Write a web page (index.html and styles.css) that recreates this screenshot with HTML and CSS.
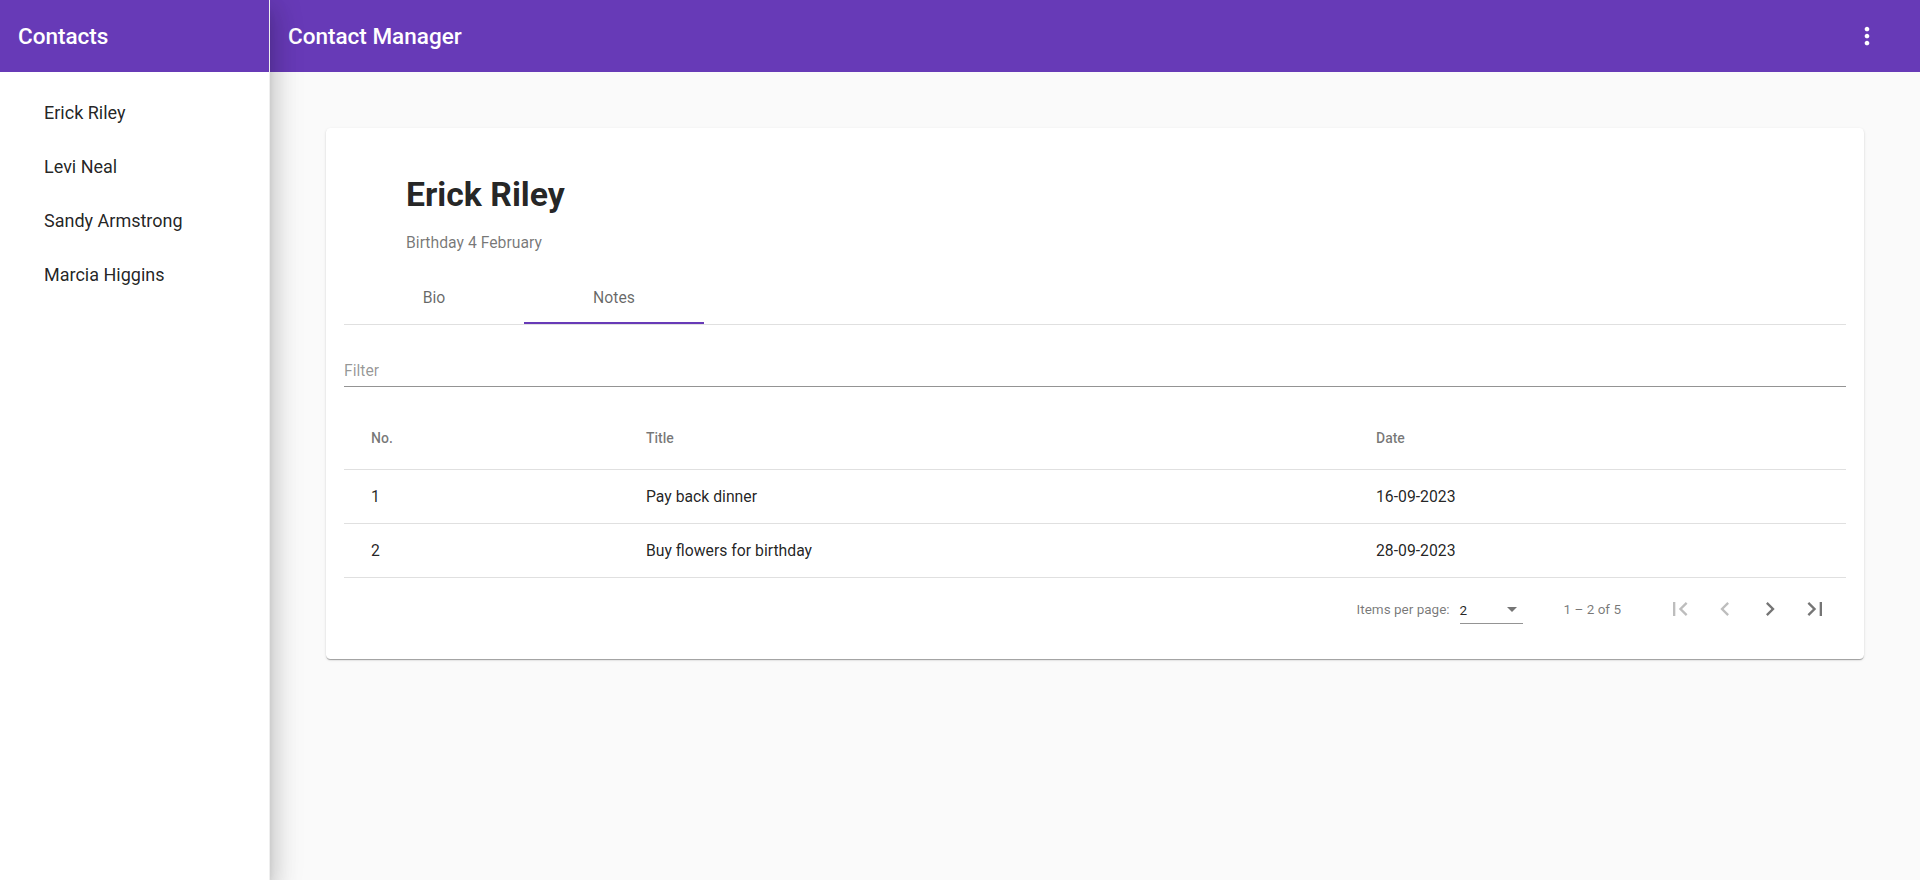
FILE: index.html
```html
<!DOCTYPE html>
<html lang="en">
<head>
<meta charset="utf-8">
<title>Contact Manager</title>
<link rel="stylesheet" href="styles.css">
</head>
<body>
<div class="app">
  <aside class="sidenav">
    <div class="toolbar side-toolbar"><span class="toolbar-title">Contacts</span></div>
    <nav class="nav-list">
      <a class="nav-item">Erick Riley</a>
      <a class="nav-item">Levi Neal</a>
      <a class="nav-item">Sandy Armstrong</a>
      <a class="nav-item">Marcia Higgins</a>
    </nav>
  </aside>
  <div class="main">
    <header class="toolbar main-toolbar">
      <span class="toolbar-title">Contact Manager</span>
      <button class="icon-btn menu-btn" aria-label="More">
        <svg viewBox="0 0 24 24" width="28" height="28"><path fill="#fff" d="M12 8c1.1 0 2-.9 2-2s-.9-2-2-2-2 .9-2 2 .9 2 2 2zm0 2c-1.1 0-2 .9-2 2s.9 2 2 2 2-.9 2-2-.9-2-2-2zm0 6c-1.1 0-2 .9-2 2s.9 2 2 2 2-.9 2-2-.9-2-2-2z"/></svg>
      </button>
    </header>
    <main class="content">
      <section class="card">
        <div class="card-header">
          <h1 class="contact-name">Erick Riley</h1>
          <p class="contact-sub">Birthday 4 February</p>
        </div>
        <div class="tabs">
          <div class="tab">Bio</div>
          <div class="tab active">Notes</div>
        </div>
        <div class="filter">Filter</div>
        <table class="notes-table">
          <thead>
            <tr><th class="col-no">No.</th><th class="col-title">Title</th><th class="col-date">Date</th></tr>
          </thead>
          <tbody>
            <tr><td class="col-no">1</td><td class="col-title">Pay back dinner</td><td class="col-date">16-09-2023</td></tr>
            <tr><td class="col-no">2</td><td class="col-title">Buy flowers for birthday</td><td class="col-date">28-09-2023</td></tr>
          </tbody>
        </table>
        <div class="paginator">
          <span class="page-size-label">Items per page:</span>
          <div class="page-select"><span class="page-select-value">2</span><span class="page-select-arrow"></span></div>
          <span class="range-label">1 – 2 of 5</span>
          <button class="icon-btn page-btn disabled" aria-label="First page">
            <svg viewBox="0 0 24 24" width="28" height="28"><path d="M18.41 16.59L13.82 12l4.59-4.59L17 6l-6 6 6 6zM6 6h2v12H6z"/></svg>
          </button>
          <button class="icon-btn page-btn disabled" aria-label="Previous page">
            <svg viewBox="0 0 24 24" width="28" height="28"><path d="M15.41 7.41L14 6l-6 6 6 6 1.41-1.41L10.83 12z"/></svg>
          </button>
          <button class="icon-btn page-btn" aria-label="Next page">
            <svg viewBox="0 0 24 24" width="28" height="28"><path d="M10 6L8.59 7.41 13.17 12l-4.58 4.59L10 18l6-6z"/></svg>
          </button>
          <button class="icon-btn page-btn" aria-label="Last page">
            <svg viewBox="0 0 24 24" width="28" height="28"><path d="M5.59 7.41L10.18 12l-4.59 4.59L7 18l6-6-6-6zM16 6h2v12h-2z"/></svg>
          </button>
        </div>
      </section>
    </main>
  </div>
</div>
</body>
</html>
```

FILE: styles.css
```css
html, body {
  margin: 0;
  padding: 0;
  height: 100%;
}

body {
  font-family: Roboto, "Liberation Sans", Arial, sans-serif;
  color: rgba(0, 0, 0, 0.87);
  background: #fafafa;
  overflow: hidden;
}

.app {
  display: flex;
  height: 880px;
}

.sidenav {
  position: relative;
  z-index: 2;
  width: 270px;
  flex: 0 0 270px;
  box-sizing: border-box;
  border-right: 1px solid #efefef;
  background: #fff;
  box-shadow: 0 8px 10px -5px rgba(0, 0, 0, 0.2), 0 16px 24px 2px rgba(0, 0, 0, 0.14), 0 6px 30px 5px rgba(0, 0, 0, 0.12);
}

.toolbar {
  height: 72px;
  background: #673ab7;
  color: #fff;
  display: flex;
  align-items: center;
  padding: 0 18px;
  box-sizing: border-box;
}

.toolbar-title {
  font-size: 22.5px;
  font-weight: 500;
  line-height: 32px;
}

.nav-list {
  padding-top: 14px;
  display: flex;
  flex-direction: column;
}

.nav-item {
  height: 54px;
  line-height: 54px;
  padding-left: 44px;
  font-size: 18px;
  color: rgba(0, 0, 0, 0.87);
}

.main {
  flex: 1;
  position: relative;
  z-index: 1;
  display: flex;
  flex-direction: column;
}

.main-toolbar {
  justify-content: space-between;
  padding-right: 31px;
}

.icon-btn {
  width: 45px;
  height: 45px;
  padding: 0;
  border: none;
  background: transparent;
  display: flex;
  align-items: center;
  justify-content: center;
  cursor: pointer;
}

.menu-btn svg {
  display: block;
}

.content {
  padding: 56px 56px 0;
}

.card {
  background: #fff;
  border-radius: 4.5px;
  padding: 18px;
  box-shadow: 0 2px 1px -1px rgba(0, 0, 0, 0.2), 0 1px 1px 0 rgba(0, 0, 0, 0.14), 0 1px 3px 0 rgba(0, 0, 0, 0.12);
}

.card-header {
  padding-left: 62px;
}

.contact-name {
  margin: 28.5px 0 0;
  font-size: 33.75px;
  line-height: 40px;
  font-weight: 700;
  color: rgba(0, 0, 0, 0.87);
}

.contact-sub {
  margin: 18.5px 0 0;
  font-size: 15.75px;
  line-height: 20px;
  color: rgba(0, 0, 0, 0.54);
}

.tabs {
  margin-top: 17px;
  display: flex;
  border-bottom: 1px solid rgba(0, 0, 0, 0.12);
}

.tab {
  position: relative;
  width: 180px;
  height: 54px;
  display: flex;
  align-items: center;
  justify-content: center;
  font-size: 15.75px;
  font-weight: 400;
  color: rgba(0, 0, 0, 0.6);
}

.tab.active::after {
  content: "";
  position: absolute;
  left: 0;
  right: 0;
  bottom: 0;
  height: 2px;
  background: #673ab7;
}

.filter {
  margin-top: 35.5px;
  padding-bottom: 5.5px;
  font-size: 15.75px;
  line-height: 20px;
  color: rgba(0, 0, 0, 0.42);
  border-bottom: 1px solid rgba(0, 0, 0, 0.42);
}

.notes-table {
  width: 100%;
  margin-top: 19.5px;
  border-collapse: separate;
  border-spacing: 0;
  table-layout: fixed;
}

.notes-table th,
.notes-table td {
  padding: 0;
  text-align: left;
  border-bottom: 1px solid rgba(0, 0, 0, 0.12);
  box-sizing: border-box;
}

.notes-table th {
  height: 63px;
  font-size: 14px;
  font-weight: 500;
  color: rgba(0, 0, 0, 0.54);
}

.notes-table td {
  height: 54px;
  font-size: 15.75px;
  color: rgba(0, 0, 0, 0.87);
}

.notes-table .col-no {
  width: 302px;
  padding-left: 27px;
}

.notes-table .col-title {
  width: 730px;
}

.notes-table .col-date {
  padding-right: 27px;
}

.paginator {
  height: 63px;
  display: flex;
  align-items: center;
  justify-content: flex-end;
  padding: 0 9px;
  font-size: 13.5px;
  color: rgba(0, 0, 0, 0.54);
}

.page-size-label {
  margin-right: 10px;
}

.page-select {
  width: 63px;
  box-sizing: border-box;
  height: 24px;
  margin-top: 5px;
  padding-bottom: 3px;
  display: flex;
  align-items: center;
  justify-content: space-between;
  border-bottom: 1px solid rgba(0, 0, 0, 0.42);
  line-height: 20px;
}

.page-select-value {
  color: rgba(0, 0, 0, 0.87);
  font-size: 13.5px;
}

.page-select-arrow {
  width: 0;
  height: 0;
  margin-right: 6px;
  border-left: 5px solid transparent;
  border-right: 5px solid transparent;
  border-top: 5px solid rgba(0, 0, 0, 0.54);
}

.range-label {
  margin: 0 36px 0 41px;
}

.page-btn svg {
  fill: rgba(0, 0, 0, 0.54);
}

.page-btn.disabled svg {
  fill: rgba(0, 0, 0, 0.26);
}
```
